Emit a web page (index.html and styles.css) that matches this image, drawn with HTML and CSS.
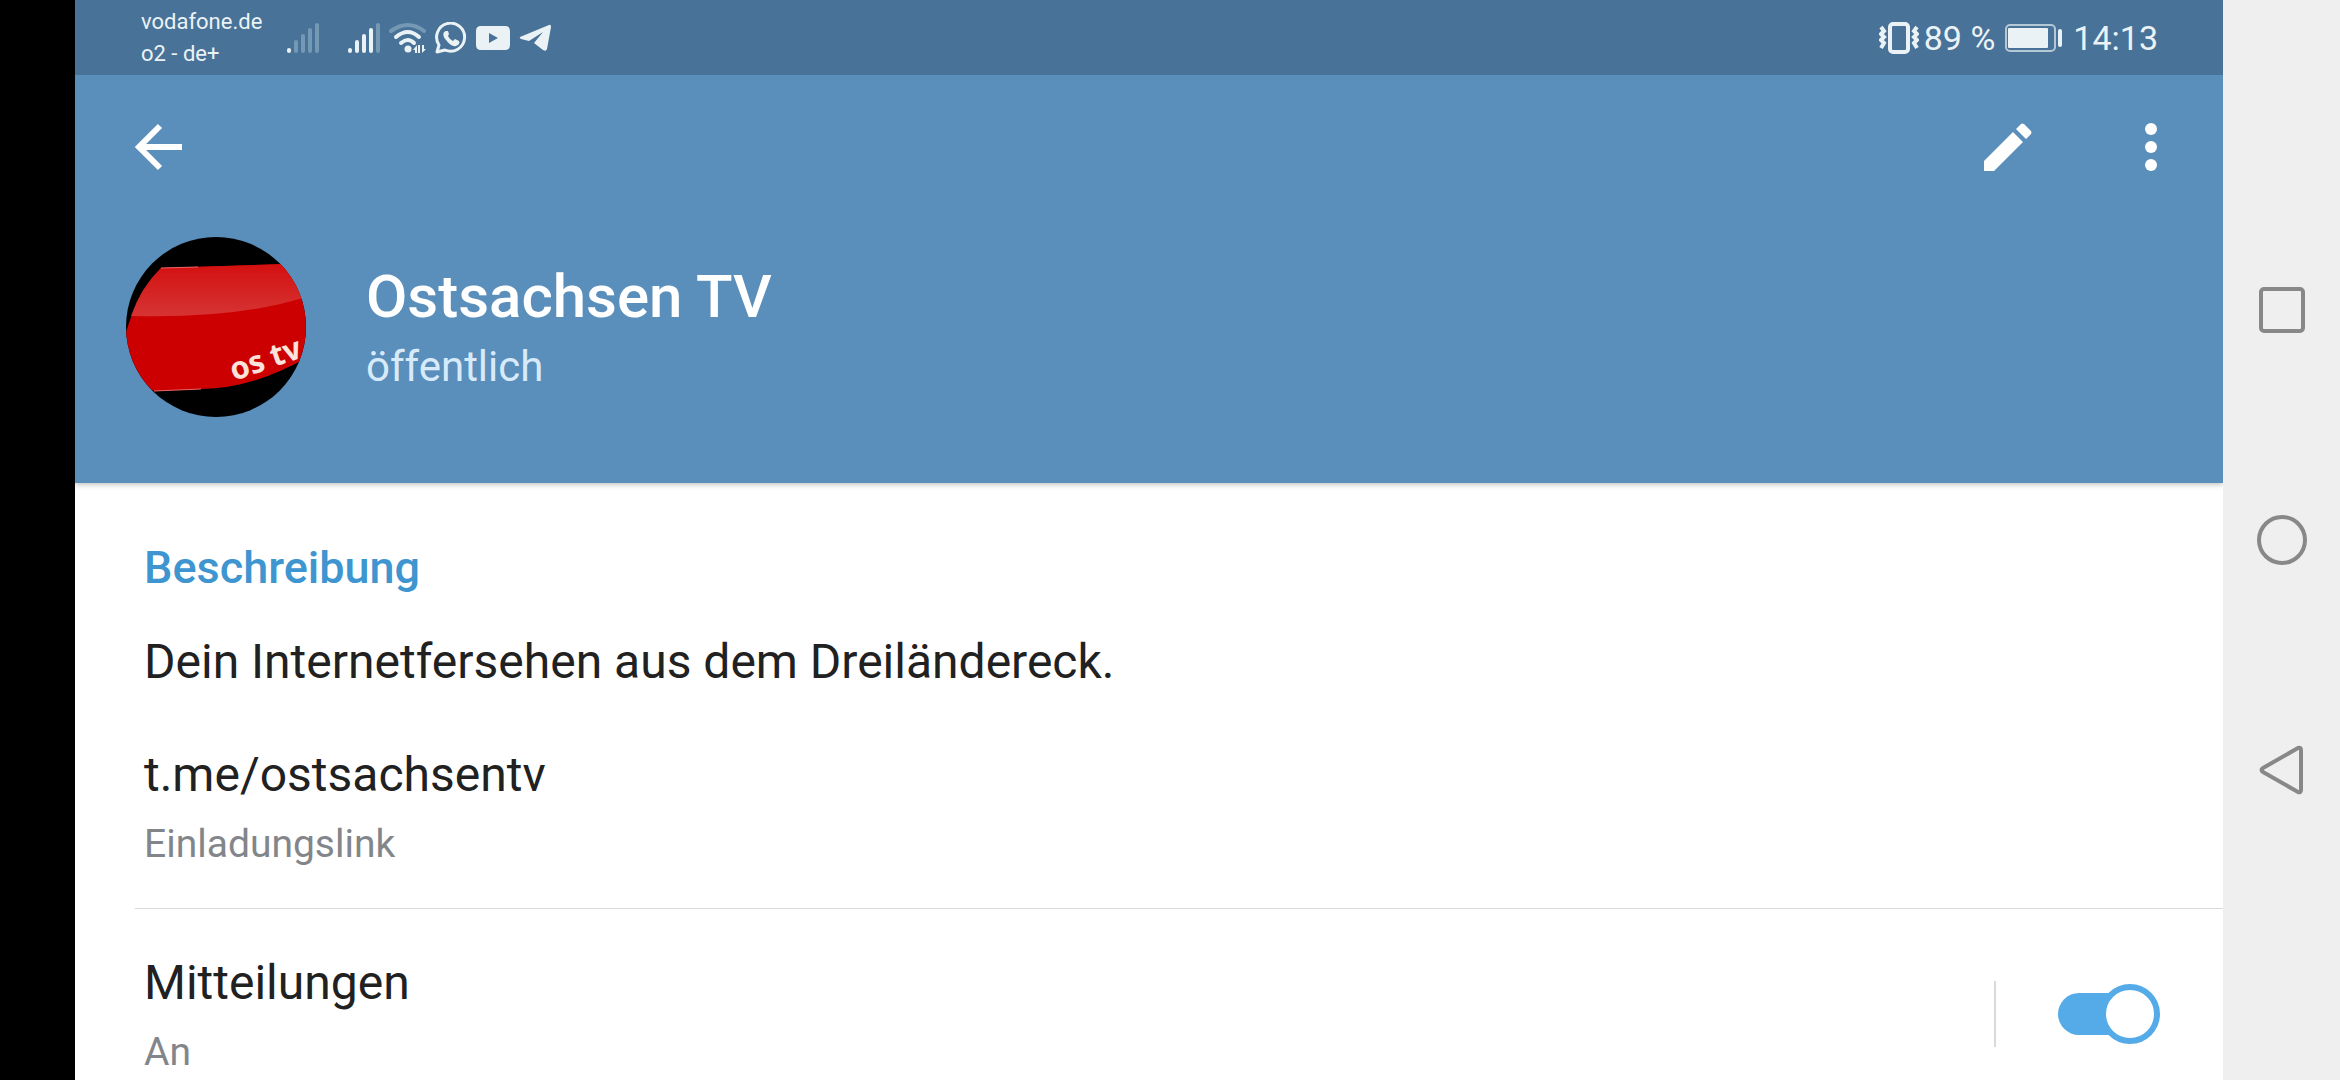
FILE: index.html
```html
<!DOCTYPE html>
<html lang="de">
<head>
    <meta charset="UTF-8">
    <meta name="viewport" content="width=device-width, initial-scale=1.0">
    <title>Ostsachsen TV</title>
    <link rel="stylesheet" href="styles.css">
</head>
<body>
    <div class="screen">
        <div class="app">
            <!-- Status bar -->
            <div class="status-bar">
                <div class="carrier">
                    <span>vodafone.de</span>
                    <span>o2 - de+</span>
                </div>
                <svg class="signal" width="34" height="32" viewBox="0 0 34 32" stroke-width="4" stroke-linecap="round">
                    <path d="M3 28V29" stroke="#ebf2f6"/>
                    <path d="M10 20V29M17 14V29M24 8V29M31 3V29" stroke="#7598b4"/>
                </svg>
                <svg class="signal" width="34" height="32" viewBox="0 0 34 32" stroke-width="4" stroke-linecap="round">
                    <path d="M3 28V29M10 20V29M17 14V29M24 8V29" stroke="#ebf2f6"/>
                    <path d="M31 3V29" stroke="#7598b4"/>
                </svg>
                <svg class="wifi" width="38" height="32" viewBox="0 0 38 32" fill="none" stroke="#ebf2f6" stroke-width="4" stroke-linecap="round">
                    <path d="M2 9Q19 -3 35 9" stroke="#7598b4"/>
                    <path d="M7 15Q19 5 30 15"/>
                    <path d="M12 21Q19 15 25 21"/>
                    <circle cx="19" cy="27" r="3.500" fill="#ebf2f6" stroke="none"/>
                    <path d="M24 28L28 23V31H26V28ZM29 23H31V31H29ZM33 23V31L37 27H35V23Z" fill="#ebf2f6" stroke="none"/>
                </svg>
                <svg class="whatsapp" width="32" height="32" viewBox="0 0 32 32" fill="none">
                    <path d="M2 30L4 23A14 14 0 1 1 10 28Z" stroke="#ebf2f6" stroke-width="3" stroke-linejoin="round"/>
                    <path d="M11 9C7 10 8 15 11 18C14 22 18 25 21 24C24 23 25 21 24 19L20 17L18 19C16 18 14 16 13 14L14 12L13 9Z" fill="#ebf2f6"/>
                </svg>
                <svg class="youtube" width="34" height="24" viewBox="0 0 34 24">
                    <path fill="#ebf2f6" fill-rule="evenodd" d="M5 0Q17 -1 29 0Q34 0 34 5Q34.500 12 34 19Q34 24 29 24Q17 25 5 24Q0 24 0 19Q-.5 12 0 5Q0 0 5 0ZM13 7V17L22 12Z"/>
                </svg>
                <svg class="telegram" width="32" height="28" viewBox="0 0 32 28">
                    <path fill="#ebf2f6" d="M1 13L30 1Q32 0 32 3L28 25Q27 28 24 26L15 19L24 8L10 17L2 15Q0 14 1 13Z"/>
                </svg>
                <div class="status-right">
                    <svg width="40" height="32" viewBox="0 0 40 32" fill="none" stroke="#ebf2f6">
                        <rect x="11" y="2" width="18" height="28" rx="3" stroke-width="4"/>
                        <path d="M2 5L5 9L2 12L5 15L2 18L5 21L2 26M38 5L35 9L38 12L35 15L38 18L35 21L38 26" stroke-width="4"/>
                    </svg>
                    <span class="percent">89 %</span>
                    <svg class="battery" width="58" height="28" viewBox="0 0 58 28">
                        <rect x="1" y="1" width="49" height="26" rx="4" fill="none" stroke="#b5c8d6" stroke-width="2"/>
                        <rect x="3" y="4" width="40" height="20" rx="1" fill="#ebf2f6"/>
                        <rect x="53" y="5" width="4" height="18" rx="2" fill="#ebf2f6"/>
                    </svg>
                    <span class="time">14:13</span>
                </div>
            </div>

            <!-- Channel header -->
            <header class="header">
                <div class="toolbar">
                    <button type="button" class="icon-button" aria-label="Zurück">
                        <svg width="48" height="48" viewBox="0 0 48 48" fill="none" stroke="#fff" stroke-width="6">
                            <path d="M26 3L5 24L26 45M5 24H48"/>
                        </svg>
                    </button>
                    <div class="toolbar-actions">
                        <button type="button" class="icon-button" aria-label="Bearbeiten">
                            <svg width="48" height="48" viewBox="0 0 48 48" fill="#fff">
                                <path d="M0 38L29 9L39 19L10 48H0ZM32 6L37 1Q38 0 40 1L47 8Q48 10 47 11L42 16Z"/>
                            </svg>
                        </button>
                        <button type="button" class="icon-button" aria-label="Mehr">
                            <svg width="12" height="48" viewBox="0 0 12 48" fill="#fff">
                                <circle cx="6" cy="6" r="6"/>
                                <circle cx="6" cy="24" r="6"/>
                                <circle cx="6" cy="42" r="6"/>
                            </svg>
                        </button>
                    </div>
                </div>
                <div class="profile">
                    <svg class="avatar" width="180" height="180" viewBox="0 0 180 180">
                        <defs>
                            <linearGradient id="gloss" x1="0" y1="0" x2="0" y2="1">
                                <stop offset="0" stop-color="#d41010"/>
                                <stop offset="1" stop-color="#d63434"/>
                            </linearGradient>
                        </defs>
                        <rect width="180" height="180" fill="#000"/>
                        <path fill="#c00" d="M35 31L160 27L180 50V121Q125 152 75 152L28 154L0 140V95Q12 55 35 31Z"/>
                        <path fill="url(#gloss)" d="M35 31L160 27L180 40V60Q110 82 5 79Q15 50 35 31Z"/>
                        <path fill="none" stroke="#e66" d="M35 31L72 30M28 154L75 152"/>
                        <text class="avatar-text" x="108" y="144" transform="rotate(-19 108 144)">os tv</text>
                    </svg>
                    <div class="profile-text">
                        <h1 class="title">Ostsachsen TV</h1>
                        <p class="subtitle">öffentlich</p>
                    </div>
                </div>
            </header>

            <!-- Channel info -->
            <main class="content">
                <section class="info">
                    <h2 class="section-heading">Beschreibung</h2>
                    <p class="value">Dein Internetfersehen aus dem Dreiländereck.</p>
                    <a class="value link" href="https://t.me/ostsachsentv">t.me/ostsachsentv</a>
                    <p class="caption">Einladungslink</p>
                </section>
                <section class="notifications">
                    <div class="notifications-text">
                        <label class="value" for="notifications">Mitteilungen</label>
                        <p class="caption">An</p>
                    </div>
                    <div class="switch-box">
                        <input type="checkbox" class="switch" id="notifications" checked>
                    </div>
                </section>
            </main>
        </div>

        <!-- System navigation -->
        <nav class="nav-bar">
            <button type="button" class="icon-button" aria-label="Übersicht">
                <svg width="50" height="50" viewBox="0 0 50 50" fill="none" stroke="#888" stroke-width="4">
                    <rect x="4" y="4" width="42" height="42" rx="3"/>
                </svg>
            </button>
            <button type="button" class="icon-button" aria-label="Startseite">
                <svg width="50" height="50" viewBox="0 0 50 50" fill="none" stroke="#888" stroke-width="4">
                    <circle cx="25" cy="25" r="23"/>
                </svg>
            </button>
            <button type="button" class="icon-button" aria-label="Zurück">
                <svg width="50" height="50" viewBox="0 0 50 50" fill="none" stroke="#888" stroke-width="4" stroke-linejoin="round">
                    <path d="M6 23L41 3Q44 2 44 5V45Q44 48 41 47L6 27Q3 25 6 23Z"/>
                </svg>
            </button>
        </nav>
    </div>
</body>
</html>
```
FILE: styles.css
```css
* {
    box-sizing: border-box;
}
body {
    margin: 0;
    font-family: Roboto, sans-serif;
    background-color: #000;
    color: #212121;
}
h1, h2, p {
    margin: 0;
}
svg {
    display: block;
    flex-shrink: 0;
}
.screen {
    display: flex;
    height: 100vh;
    padding-left: 75px;
    overflow: hidden;
}
.app {
    flex: 1;
    display: flex;
    flex-direction: column;
    overflow: hidden;
    background-color: #fff;
}

/* Status bar */
.status-bar {
    position: relative;
    z-index: 1;
    display: flex;
    flex-shrink: 0;
    align-items: center;
    height: 75px;
    padding: 0 65px 0 66px;
    background-color: #487297;
    color: #ebf2f6;
}
.carrier {
    display: flex;
    flex-direction: column;
    width: 145px;
    font-size: 22px;
    line-height: 32px;
}
.signal {
    margin-right: 27px;
}
.wifi {
    margin-left: -19px;
}
.whatsapp {
    margin-left: 8px;
}
.youtube {
    margin-left: 9px;
}
.telegram {
    margin-left: 9px;
}
.status-right {
    display: flex;
    align-items: center;
    margin-left: auto;
    font-size: 34px;
}
.percent {
    margin-left: 5px;
}
.battery {
    margin: 0 10px;
}

/* Header */
.header {
    position: relative;
    flex-shrink: 0;
    height: 408px;
    padding: 48px 66px 0 51px;
    background-color: #5a8ebb;
    box-shadow: 0 1px 6px rgba(0, 0, 0, 0.3);
}
.icon-button {
    padding: 0;
    border: none;
    background: none;
    cursor: pointer;
}
.toolbar {
    display: flex;
    justify-content: space-between;
    padding-left: 8px;
}
.toolbar-actions {
    display: flex;
    gap: 113px;
}
.profile {
    display: flex;
    align-items: center;
    gap: 60px;
    margin-top: 66px;
}
.avatar {
    border-radius: 50%;
}
.avatar-text {
    font-family: "Open Sans", sans-serif;
    font-size: 31px;
    font-weight: 700;
    fill: #fbe3dc;
}
.title {
    font-size: 60px;
    font-weight: 500;
    line-height: 72px;
    color: #fff;
}
.subtitle {
    margin-top: 8px;
    font-size: 42px;
    line-height: 52px;
    color: #d7eafa;
}

/* Content */
.info {
    display: flex;
    flex-direction: column;
    margin-left: 60px;
    padding: 57px 9px 38px;
    border-bottom: 1px solid #d9d9d9;
}
.section-heading {
    font-size: 45px;
    font-weight: 500;
    line-height: 56px;
    color: #3e95d0;
}
.value {
    display: block;
    font-size: 48px;
    line-height: 56px;
}
.section-heading + .value {
    margin-top: 38px;
}
.link {
    margin-top: 57px;
    color: inherit;
    text-decoration: none;
}
.caption {
    margin-top: 15px;
    font-size: 39px;
    line-height: 52px;
    color: #82868a;
}
.notifications {
    display: flex;
    padding: 46px 63px 0 69px;
}
.switch-box {
    display: flex;
    align-items: center;
    height: 66px;
    margin: 26px 0 0 auto;
    padding-left: 62px;
    border-left: 2px solid #d9d9d9;
}
.switch {
    appearance: none;
    display: flex;
    align-items: center;
    width: 102px;
    height: 60px;
    margin: 0;
    cursor: pointer;
}
.switch::before {
    content: "";
    flex: 1;
    height: 42px;
    margin-right: -30px;
    border-radius: 21px 0 0 21px;
    background-color: #54abe8;
}
.switch::after {
    content: "";
    box-sizing: border-box;
    width: 60px;
    height: 60px;
    border: 6px solid #54abe8;
    border-radius: 50%;
    background-color: #fff;
}

/* Navigation */
.nav-bar {
    display: flex;
    flex-direction: column;
    align-items: center;
    justify-content: center;
    gap: 180px;
    width: 117px;
    background-color: #efefef;
}
```
